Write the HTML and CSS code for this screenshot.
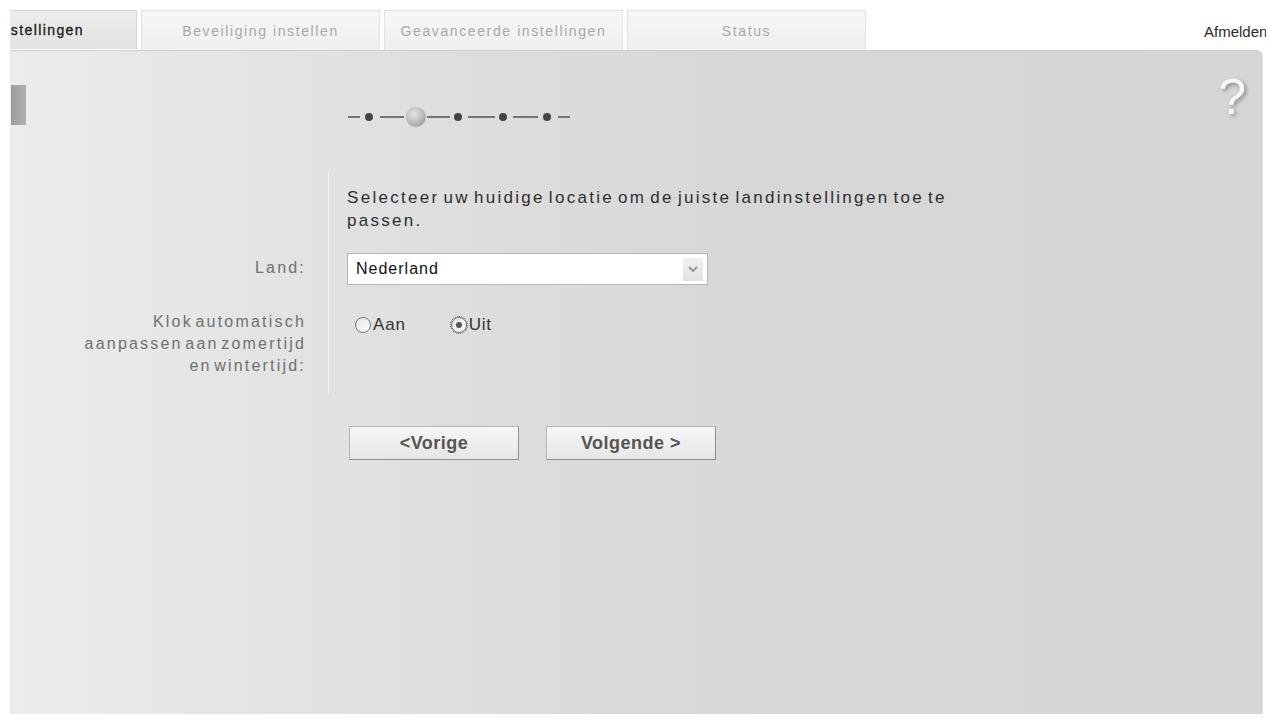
FILE: index.html
```html
<!DOCTYPE html>
<html lang="nl">
  <head>
    <meta charset="UTF-8" />
    <meta name="viewport" content="width=device-width, initial-scale=1.0" />
    <title>Basisinstellingen</title>
    <link rel="stylesheet" href="styles.css">
  </head>
  <body>
    <div class="top-bar">
      <div class="tabs">
        <div class="tab tab-active"><span>Basisinstellingen</span></div>
        <div class="tab">Beveiliging instellen</div>
        <div class="tab">Geavanceerde instellingen</div>
        <div class="tab">Status</div>
      </div>
      <a class="logout" href="#">Afmelden</a>
    </div>

    <div class="panel">
      <div class="side-marker"></div>
      <div class="help">?</div>

      <div class="wizard">
        <div class="steps">
          <svg width="230" height="24" viewBox="0 0 230 24">
            <g stroke="#5a5a5a" stroke-width="1.6">
              <line x1="0" y1="12" x2="12" y2="12" />
              <line x1="32" y1="12" x2="56" y2="12" />
              <line x1="79" y1="12" x2="102" y2="12" />
              <line x1="120" y1="12" x2="147" y2="12" />
              <line x1="165" y1="12" x2="190" y2="12" />
              <line x1="210" y1="12" x2="222" y2="12" />
            </g>
            <g fill="#444">
              <circle cx="21" cy="12" r="4" />
              <circle cx="110" cy="12" r="4" />
              <circle cx="155" cy="12" r="4" />
              <circle cx="199" cy="12" r="4" />
            </g>
            <defs>
              <radialGradient id="current" cx="0.4" cy="0.35" r="0.7">
                <stop offset="0" stop-color="#e4e4e4" />
                <stop offset="0.6" stop-color="#bdbdbd" />
                <stop offset="1" stop-color="#9a9a9a" />
              </radialGradient>
            </defs>
            <circle cx="68" cy="12" r="10" fill="url(#current)" stroke="#c8c8c8" stroke-width="1" />
          </svg>
        </div>

        <div class="form-grid">
          <div class="label"></div>
          <div class="field field-intro">
            <p>Selecteer uw huidige locatie om de juiste landinstellingen toe te passen.</p>
          </div>

          <div class="label label-land">Land:</div>
          <div class="field field-land">
            <div class="select">
              <span>Nederland</span>
              <span class="select-arrow">
                <svg width="10" height="7" viewBox="0 0 10 7">
                  <path d="M1 1 L5 5 L9 1" fill="none" stroke="#9a9a9a" stroke-width="2" />
                </svg>
              </span>
            </div>
          </div>

          <div class="label label-clock">Klok automatisch<br>aanpassen aan zomertijd<br>en wintertijd:</div>
          <div class="field field-clock">
            <label class="radio"><span class="dot"></span>Aan</label>
            <label class="radio radio-on"><span class="dot"></span>Uit</label>
          </div>
        </div>

        <div class="buttons">
          <button type="button">&lt;Vorige</button>
          <button type="button">Volgende &gt;</button>
        </div>
      </div>
    </div>
  </body>
</html>
```

FILE: styles.css
```css
body {
  margin: 0;
  font-family: "Liberation Sans", Arial, sans-serif;
  background-color: #fff;
  color: #333;
}

.top-bar {
  display: flex;
  align-items: flex-start;
  height: 50px;
}

.tabs {
  display: flex;
  gap: 4px;
  margin-left: 10px;
  padding-top: 10px;
}

.tab {
  width: 237px;
  height: 39px;
  display: flex;
  align-items: center;
  justify-content: center;
  background: linear-gradient(#f7f7f7, #efefef);
  border: 1px solid #e2e2e2;
  border-bottom: none;
  color: #a8a8a8;
  font-size: 14px;
  letter-spacing: 1.6px;
  white-space: nowrap;
}

.tab-active {
  width: 127px;
  justify-content: flex-end;
  padding-right: 52px;
  box-sizing: border-box;
  overflow: hidden;
  border-left: none;
  background: linear-gradient(#ececec, #e3e3e3);
  border-color: #d6d6d6;
  color: #1a1a1a;
  letter-spacing: 1.4px;
  -webkit-text-stroke: 0.3px #1a1a1a;
}

.logout {
  margin-left: auto;
  margin-top: 23px;
  margin-right: 2px;
  width: 62px;
  overflow: hidden;
  white-space: nowrap;
  font-size: 15px;
  color: #2a2a2a;
  text-decoration: none;
}

.panel {
  position: relative;
  height: 663px;
  margin: 0 6px 0 10px;
  background: linear-gradient(to right, #ececec 0%, #dedede 35%, #d7d7d7 60%, #d6d6d6 100%);
  border-top: 1px solid #cfcfcf;
  border-top-right-radius: 6px;
  box-shadow: 0 2px 0 #8e8e8e, 1px 0 0 #e0e0e0;
}

.side-marker {
  position: absolute;
  left: 1px;
  top: 34px;
  width: 15px;
  height: 40px;
  background: linear-gradient(to right, #9d9d9d, #b0b0b0);
}

.help {
  position: absolute;
  right: 16px;
  top: 21px;
  font-size: 50px;
  line-height: 1;
  color: #f8f8f8;
  text-shadow: 2px 2px 4px #8a8a8a;
}

.wizard {
  padding-top: 54px;
}

.steps {
  margin-left: 338px;
  height: 24px;
}

.form-grid {
  display: grid;
  grid-template-columns: 318px 1fr;
  margin-top: 43px;
}

.label {
  text-align: right;
  padding-right: 22px;
  color: #707070;
  font-size: 16px;
  letter-spacing: 2.2px;
  word-spacing: -4px;
  line-height: 22px;
}

.field {
  border-left: 1px solid #f1f1f1;
  padding-left: 18px;
}

.field-intro {
  padding-top: 14px;
}

.field-intro p {
  margin: 0;
  width: 625px;
  font-size: 17px;
  letter-spacing: 2.3px;
  word-spacing: -3px;
  line-height: 23px;
  color: #2e2e2e;
}

.label-land {
  padding-top: 25px;
}

.field-land {
  padding-top: 21px;
}

.select {
  width: 361px;
  height: 32px;
  display: flex;
  align-items: center;
  justify-content: space-between;
  padding: 0 4px 0 8px;
  box-sizing: border-box;
  background-color: #fff;
  border: 1px solid #b5b5b5;
  font-size: 16px;
  color: #111;
  letter-spacing: 1px;
}

.select-arrow {
  width: 20px;
  height: 23px;
  display: flex;
  align-items: center;
  justify-content: center;
  background: linear-gradient(#f0f0f0, #e2e2e2);
}

.label-clock {
  padding-top: 26px;
  padding-bottom: 18px;
}

.field-clock {
  padding-top: 29px;
  display: flex;
  align-items: flex-start;
  gap: 37px;
}

.radio {
  display: flex;
  align-items: center;
  height: 22px;
  padding-left: 8px;
  font-size: 17px;
  letter-spacing: 0.8px;
  color: #333;
}

.radio .dot {
  width: 14px;
  height: 14px;
  margin-right: 2px;
  border: 1px solid #777;
  border-radius: 50%;
  background: linear-gradient(135deg, #e4e4e4, #fff);
}

.radio-on .dot {
  position: relative;
  outline: 1px dotted #555;
}

.radio-on .dot::after {
  content: "";
  position: absolute;
  left: 4px;
  top: 4px;
  width: 6px;
  height: 6px;
  border-radius: 50%;
  background-color: #555;
}

.buttons {
  display: flex;
  gap: 27px;
  margin-top: 31px;
  margin-left: 339px;
}

button {
  width: 170px;
  height: 34px;
  background: linear-gradient(#f6f6f6, #e6e6e6);
  border: 1px solid #b6b6b6;
  border-right-color: #8f8f8f;
  border-bottom-color: #8f8f8f;
  font-family: "Liberation Sans", Arial, sans-serif;
  font-weight: bold;
  font-size: 18px;
  color: #555;
  letter-spacing: 0.5px;
  cursor: pointer;
}
```
